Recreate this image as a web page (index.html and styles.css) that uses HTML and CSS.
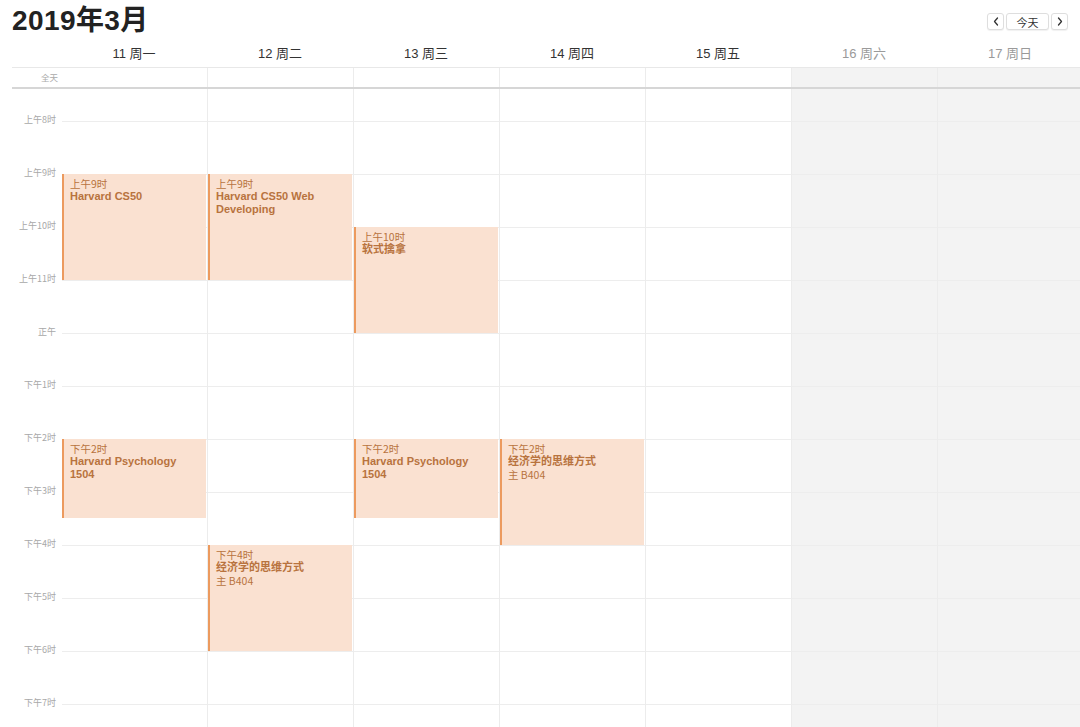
FILE: index.html
```html
<!DOCTYPE html>
<html lang="zh-CN">
<head>
<meta charset="utf-8">
<title>2019年3月</title>
<link rel="stylesheet" href="styles.css">
</head>
<body>
<div class="cal">
  <header class="top">
    <h1 class="title">2019年3月</h1>
    <div class="nav">
      <button class="btn arrow"><svg width="6" height="9" viewBox="0 0 6 9"><path d="M4.5 1 L1.5 4.5 L4.5 8" fill="none" stroke="#333" stroke-width="1.3" stroke-linecap="round" stroke-linejoin="round"/></svg></button>
      <button class="btn today">今天</button>
      <button class="btn arrow"><svg width="6" height="9" viewBox="0 0 6 9"><path d="M1.5 1 L4.5 4.5 L1.5 8" fill="none" stroke="#333" stroke-width="1.3" stroke-linecap="round" stroke-linejoin="round"/></svg></button>
    </div>
  </header>

  <div class="days">
    <div class="gut"></div>
    <div class="day">11 周一</div>
    <div class="day">12 周二</div>
    <div class="day">13 周三</div>
    <div class="day">14 周四</div>
    <div class="day">15 周五</div>
    <div class="day wkd">16 周六</div>
    <div class="day wkd">17 周日</div>
  </div>

  <div class="allday">
    <div class="gut"><span>全天</span></div>
    <div class="acell first"></div>
    <div class="acell"></div>
    <div class="acell"></div>
    <div class="acell"></div>
    <div class="acell"></div>
    <div class="acell wk"></div>
    <div class="acell wk"></div>
  </div>

  <div class="grid">
    <div class="times">
      <div class="tl">上午8时</div>
      <div class="tl">上午9时</div>
      <div class="tl">上午10时</div>
      <div class="tl">上午11时</div>
      <div class="tl">正午</div>
      <div class="tl">下午1时</div>
      <div class="tl">下午2时</div>
      <div class="tl">下午3时</div>
      <div class="tl">下午4时</div>
      <div class="tl">下午5时</div>
      <div class="tl">下午6时</div>
      <div class="tl">下午7时</div>
    </div>

    <div class="col first">
      <div class="lead"></div>
      <div class="hr"></div><div class="hr"></div><div class="hr"></div><div class="hr"></div><div class="hr"></div><div class="hr"></div><div class="hr"></div><div class="hr"></div><div class="hr"></div><div class="hr"></div><div class="hr"></div><div class="hr"></div>
      <div class="ev" style="top:85px;height:106px">
        <div class="t">上午9时</div>
        <div class="n">Harvard CS50</div>
      </div>
      <div class="ev" style="top:350px;height:79px">
        <div class="t">下午2时</div>
        <div class="n">Harvard Psychology 1504</div>
      </div>
    </div>

    <div class="col">
      <div class="lead"></div>
      <div class="hr"></div><div class="hr"></div><div class="hr"></div><div class="hr"></div><div class="hr"></div><div class="hr"></div><div class="hr"></div><div class="hr"></div><div class="hr"></div><div class="hr"></div><div class="hr"></div><div class="hr"></div>
      <div class="ev" style="top:85px;height:106px">
        <div class="t">上午9时</div>
        <div class="n">Harvard CS50 Web Developing</div>
      </div>
      <div class="ev" style="top:456px;height:106px">
        <div class="t">下午4时</div>
        <div class="n">经济学的思维方式</div>
        <div class="t">主 B404</div>
      </div>
    </div>

    <div class="col">
      <div class="lead"></div>
      <div class="hr"></div><div class="hr"></div><div class="hr"></div><div class="hr"></div><div class="hr"></div><div class="hr"></div><div class="hr"></div><div class="hr"></div><div class="hr"></div><div class="hr"></div><div class="hr"></div><div class="hr"></div>
      <div class="ev" style="top:138px;height:106px">
        <div class="t">上午10时</div>
        <div class="n">软式擒拿</div>
      </div>
      <div class="ev" style="top:350px;height:79px">
        <div class="t">下午2时</div>
        <div class="n">Harvard Psychology 1504</div>
      </div>
    </div>

    <div class="col">
      <div class="lead"></div>
      <div class="hr"></div><div class="hr"></div><div class="hr"></div><div class="hr"></div><div class="hr"></div><div class="hr"></div><div class="hr"></div><div class="hr"></div><div class="hr"></div><div class="hr"></div><div class="hr"></div><div class="hr"></div>
      <div class="ev" style="top:350px;height:106px">
        <div class="t">下午2时</div>
        <div class="n">经济学的思维方式</div>
        <div class="t">主 B404</div>
      </div>
    </div>

    <div class="col">
      <div class="lead"></div>
      <div class="hr"></div><div class="hr"></div><div class="hr"></div><div class="hr"></div><div class="hr"></div><div class="hr"></div><div class="hr"></div><div class="hr"></div><div class="hr"></div><div class="hr"></div><div class="hr"></div><div class="hr"></div>
    </div>

    <div class="col wk">
      <div class="lead"></div>
      <div class="hr"></div><div class="hr"></div><div class="hr"></div><div class="hr"></div><div class="hr"></div><div class="hr"></div><div class="hr"></div><div class="hr"></div><div class="hr"></div><div class="hr"></div><div class="hr"></div><div class="hr"></div>
    </div>

    <div class="col wk">
      <div class="lead"></div>
      <div class="hr"></div><div class="hr"></div><div class="hr"></div><div class="hr"></div><div class="hr"></div><div class="hr"></div><div class="hr"></div><div class="hr"></div><div class="hr"></div><div class="hr"></div><div class="hr"></div><div class="hr"></div>
    </div>
  </div>
</div>
</body>
</html>
```

FILE: styles.css
```css
* { box-sizing: border-box; }
html, body {
  margin: 0;
  padding: 0;
  background: #fff;
  overflow: hidden;
}
body {
  width: 1080px;
  height: 727px;
  font-family: "Liberation Sans", "Noto Sans CJK SC", sans-serif;
  color: #333;
}
.cal {
  width: 1080px;
  height: 727px;
  overflow: hidden;
}
.top {
  height: 40px;
  display: flex;
  align-items: flex-start;
  justify-content: space-between;
  padding: 0 12px;
}
.title {
  margin: 4px 0 0 0;
  font-size: 28px;
  line-height: 34px;
  font-weight: bold;
  color: #222;
  letter-spacing: 0.4px;
}
.nav {
  display: flex;
  gap: 2px;
  margin-top: 13px;
}
.btn {
  font-family: "Noto Sans CJK SC", sans-serif;
  height: 17px;
  padding: 0;
  background: #fff;
  border: 1px solid #dedede;
  border-radius: 3px;
  box-shadow: 0 1px 1px rgba(0,0,0,0.06);
  color: #333;
  font-size: 11px;
  line-height: 14px;
  display: flex;
  align-items: center;
  justify-content: center;
}
.arrow { width: 17px; }
.today { width: 43px; }

.days {
  display: grid;
  grid-template-columns: 61px repeat(7, 146px);
  height: 27px;
  align-items: center;
  padding-bottom: 2px;
}
.day {
  text-align: center;
  font-size: 13px;
  color: #333;
  font-family: "Liberation Sans", "Noto Sans CJK SC", sans-serif;
}
.day.wkd { color: #9a9a9a; }

.allday {
  display: grid;
  grid-template-columns: 49px repeat(7, 146px);
  margin-left: 12px;
  height: 22px;
  border-top: 1px solid #e8e8e8;
  border-bottom: 2px solid #d6d6d6;
}
.allday .gut {
  display: flex;
  justify-content: flex-end;
  align-items: center;
  padding-right: 3px;
  padding-bottom: 2px;
}
.allday .gut span {
  font-family: "Noto Sans CJK SC", sans-serif;
  font-size: 8.5px;
  color: #aaa;
}
.acell { border-left: 1px solid #ececec; }
.acell.first { border-left: none; }
.acell.wk { background: #f3f3f3; }

.grid {
  display: grid;
  grid-template-columns: 61px repeat(7, 146px);
  height: 640px;
}
.times {
  padding-top: 4px;
}
.tl {
  height: 53px;
  display: flex;
  align-items: center;
  justify-content: flex-end;
  padding-right: 5px;
  font-family: "Noto Sans CJK SC", sans-serif;
  font-size: 9px;
  color: #a8a8a8;
}
.col {
  position: relative;
  border-left: 1px solid #ececec;
}
.col.first { border-left: none; padding-left: 1px; }
.col.wk { background: #f3f3f3; }
.lead { height: 32px; }
.hr {
  height: 53px;
  border-top: 1px solid #ededed;
}
.ev {
  position: absolute;
  left: 0;
  right: 1px;
  background: #fae1d1;
  border-left: 2px solid #ec9a5e;
  padding: 3px 6px 0 6px;
  color: #b8733e;
  font-size: 10.5px;
  line-height: 13px;
  overflow: hidden;
}
.col.first .ev { left: 1px; }
.ev .t {
  font-family: "Noto Sans CJK SC", sans-serif;
  font-weight: normal;
}
.ev .n {
  font-family: "Liberation Sans", "Noto Sans CJK SC", sans-serif;
  font-size: 11px;
  font-weight: bold;
}
```
